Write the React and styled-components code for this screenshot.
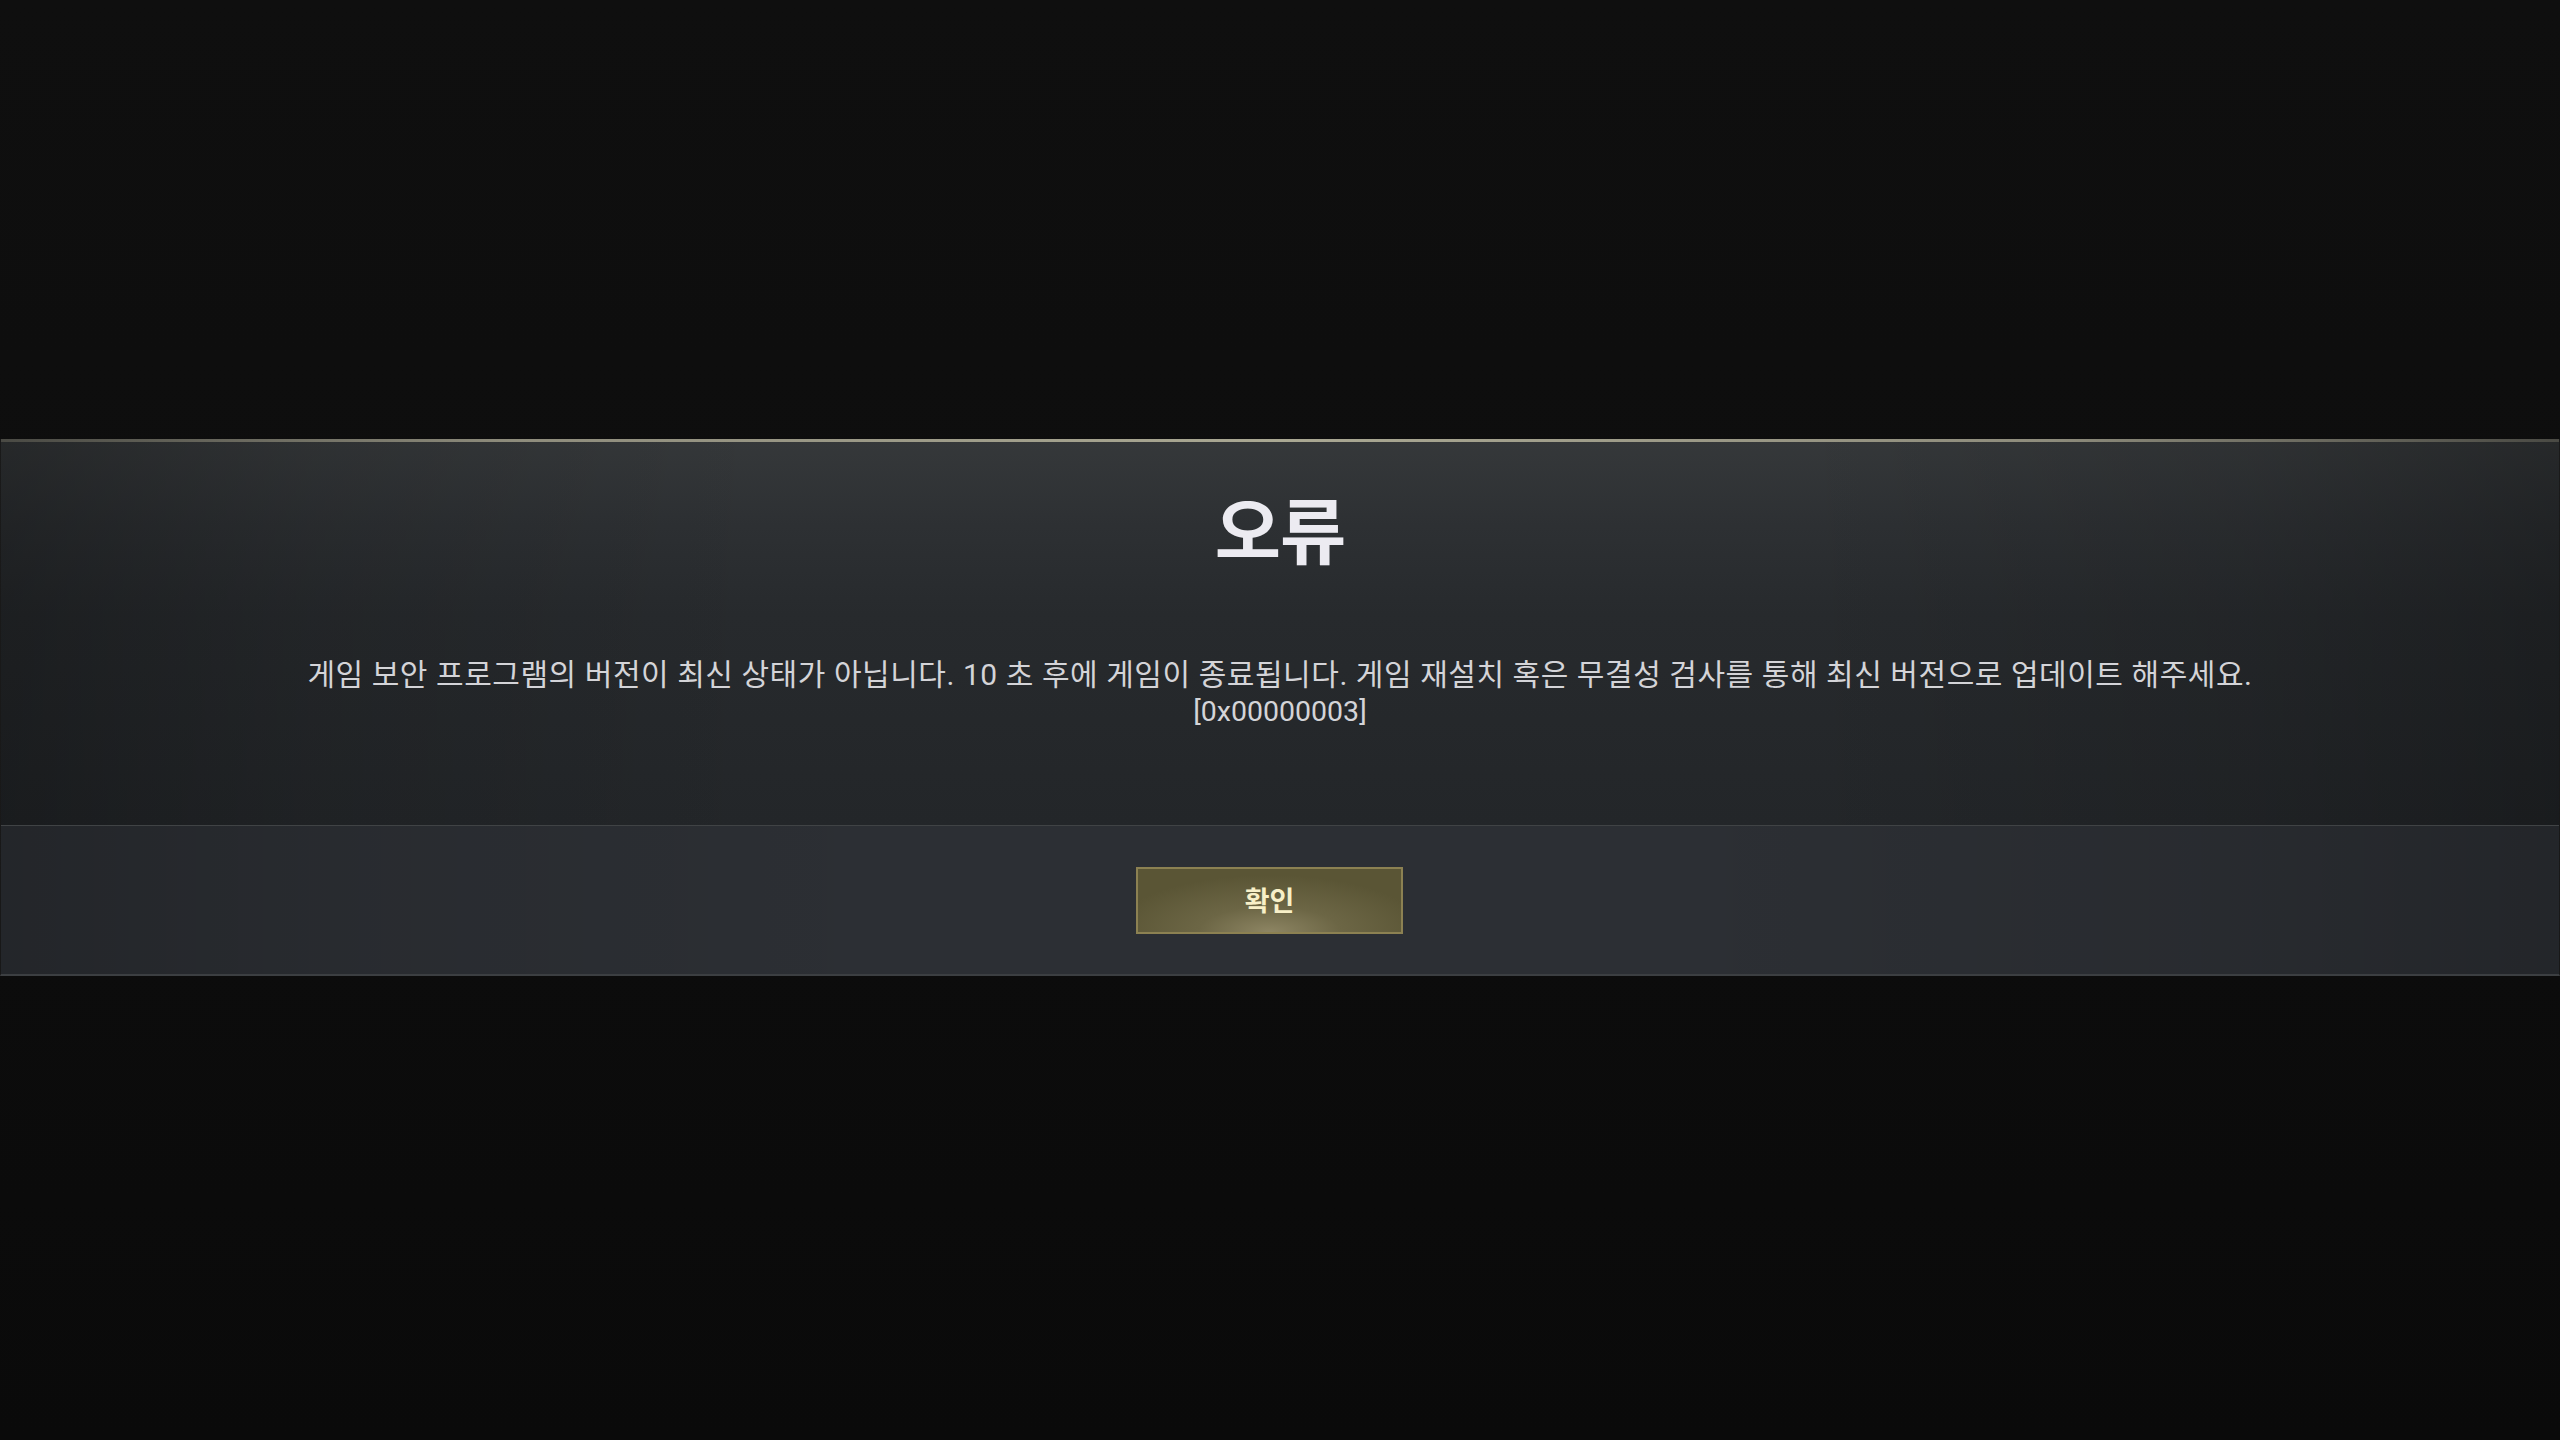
import React from 'react';
import styled, { createGlobalStyle } from 'styled-components';

const GlobalStyle = createGlobalStyle`
  html, body {
    margin: 0;
    padding: 0;
    background: #0d0d0d;
  }
  * {
    box-sizing: border-box;
  }
`;

const Screen = styled.div`
  width: 2560px;
  height: 1440px;
  padding-top: 439px;
  background: linear-gradient(to bottom, #0f0f0f 0%, #0d0d0d 50%, #0a0a0a 100%);
  font-family: Roboto, "Noto Sans CJK KR", sans-serif;
`;

const Dialog = styled.div`
  width: 100%;
  display: flex;
  flex-direction: column;
  border-left: 1px solid rgba(255, 255, 255, 0.05);
  border-right: 1px solid rgba(255, 255, 255, 0.05);
  border-bottom: 2px solid #3c3f42;
`;

const GoldLine = styled.div`
  height: 3px;
  background: linear-gradient(
    to right,
    #4a4a44 0%,
    #8e8c7c 20%,
    #aaa893 50%,
    #8e8c7c 80%,
    #4a4a44 100%
  );
`;

const Header = styled.div`
  height: 384px;
  display: flex;
  flex-direction: column;
  align-items: center;
  padding-top: 40px;
  background:
    linear-gradient(
      to right,
      rgba(0, 0, 0, 0.28) 0%,
      rgba(0, 0, 0, 0.12) 12%,
      rgba(0, 0, 0, 0) 30%,
      rgba(0, 0, 0, 0) 70%,
      rgba(0, 0, 0, 0.12) 88%,
      rgba(0, 0, 0, 0.28) 100%
    ),
    linear-gradient(to bottom, #35383a 0%, #2d3033 22%, #272a2d 45%, #232629 100%);
  border-bottom: 1px solid #404345;
`;

const Title = styled.h1`
  margin: 0;
  font-family: "Noto Sans CJK KR", sans-serif;
  font-weight: 700;
  font-size: 72px;
  line-height: 90px;
  color: #ecebf1;
  letter-spacing: -1px;
`;

const Message = styled.p`
  margin: 85px 0 0;
  font-size: 30px;
  line-height: 36px;
  font-weight: 400;
  letter-spacing: 0.55px;
  color: #d4d4d8;
  text-align: center;
`;

const ErrorCode = styled.span`
  font-size: 28.5px;
  letter-spacing: 0;
`;

const Footer = styled.div`
  height: 148px;
  display: flex;
  align-items: center;
  justify-content: center;
  background:
    linear-gradient(
      to right,
      rgba(0, 0, 0, 0.2) 0%,
      rgba(0, 0, 0, 0.08) 15%,
      rgba(0, 0, 0, 0) 35%,
      rgba(0, 0, 0, 0) 65%,
      rgba(0, 0, 0, 0.08) 85%,
      rgba(0, 0, 0, 0.2) 100%
    ),
    #2c2f34;
`;

const ConfirmButton = styled.button`
  width: 267px;
  height: 67px;
  margin-right: 21px;
  border: 2px solid #8c8152;
  background: radial-gradient(
    ellipse 60% 90% at 50% 100%,
    #8d8563 0%,
    #6c6645 45%,
    #5a5535 100%
  );
  color: #f8f0c8;
  font-family: "Noto Sans CJK KR", sans-serif;
  font-weight: 700;
  font-size: 27px;
  cursor: pointer;
  display: flex;
  align-items: center;
  justify-content: center;
  padding: 0 0 2px;
`;

export default function App() {
  return (
    <>
      <GlobalStyle />
      <Screen>
        <Dialog>
          <GoldLine />
          <Header>
            <Title>오류</Title>
            <Message>
              게임 보안 프로그램의 버전이 최신 상태가 아닙니다. 10 초 후에 게임이 종료됩니다. 게임 재설치 혹은 무결성 검사를 통해 최신 버전으로 업데이트 해주세요.
              <br />
              <ErrorCode>[0x00000003]</ErrorCode>
            </Message>
          </Header>
          <Footer>
            <ConfirmButton>확인</ConfirmButton>
          </Footer>
        </Dialog>
      </Screen>
    </>
  );
}
